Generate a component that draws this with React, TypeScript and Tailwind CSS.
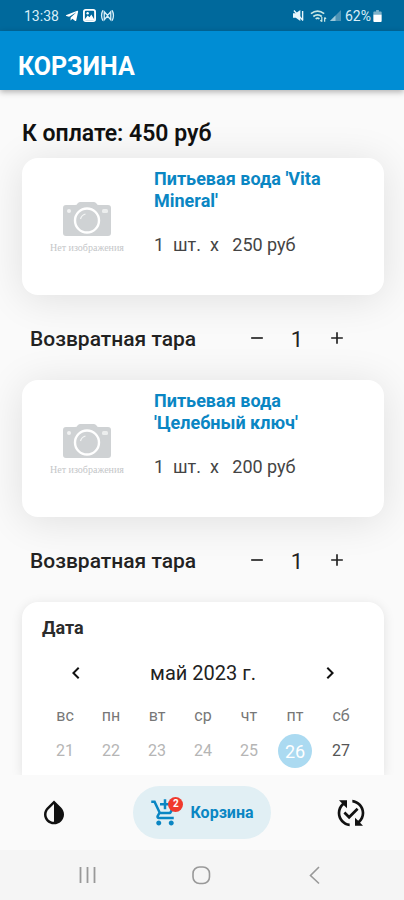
import { FaTelegramPlane } from "react-icons/fa";
import {
  MdAdd,
  MdAddShoppingCart,
  MdChevronLeft,
  MdChevronRight,
  MdPublishedWithChanges,
  MdRemove,
} from "react-icons/md";

const products = [
  { title: "Питьевая вода 'Vita Mineral'", count: 1, price: 250, tare: 1 },
  { title: "Питьевая вода 'Целебный ключ'", count: 1, price: 200, tare: 1 },
];

const weekdays = ["вс", "пн", "вт", "ср", "чт", "пт", "сб"];
const days = [21, 22, 23, 24, 25, 26, 27];
const today = 26;

function StatusBar() {
  return (
    <div className="flex h-[31px] shrink-0 items-center bg-[#00699c] pr-[22px] pl-6 text-[14px] leading-none text-[#d8eef8]">
      <span>13:38</span>
      <FaTelegramPlane className="ml-[6px] h-[14px] w-[14px] text-white" />
      <svg viewBox="0 0 14 14" className="ml-1 h-[13px] w-[13px]">
        <rect x="1" y="1" width="12" height="12" rx="2" fill="none" stroke="#fff" strokeWidth="2" />
        <path d="M2 11l3-4 2 2 2-3 3 5v1H2z" fill="#fff" />
        <circle cx="5" cy="4.5" r="1.3" fill="#fff" />
      </svg>
      <svg viewBox="0 0 16 14" className="ml-1 h-[13px] w-[15px]" fill="none" stroke="currentColor" strokeWidth="1.4">
        <path d="M3 1.5Q.2 7 3 12.5M13 1.5Q15.8 7 13 12.5" />
        <path d="M4.5 11.5V3L8 7l3.5-4v8.5L8 7.5z" />
      </svg>
      <div className="ml-auto flex items-center">
        <svg viewBox="0 0 12 14" className="h-[13px] w-[11px]">
          <path d="M0 4.5h3L8 1v12L3 9.5H0z" fill="#e8f6fc" />
          <path d="M1 1.5l10 11M10.5 2v10" fill="none" stroke="#e8f6fc" strokeWidth="1.5" />
        </svg>
        <svg viewBox="0 0 18 14" className="ml-[6px] h-[14px] w-[17px]" fill="none" stroke="#c8e8e4" strokeWidth="1.8">
          <path d="M1 4.5q7-5.5 14 0M3.5 7.5q4.5-3.6 9 0M6 10q2-1.5 4 0" />
          <path d="M12.5 8v5M11 11.5l1.5 1.5M15.5 13V8.5M17 10l-1.500-1.500" strokeWidth="1.3" />
        </svg>
        <svg viewBox="0 0 12 12" className="ml-[3px] h-[11px] w-[11px]">
          <path d="M0 12L12 0v12z" fill="#4d93b5" />
          <path d="M0 12l6-6v6z" fill="#9cc8da" />
        </svg>
        <span className="ml-1">62%</span>
        <svg viewBox="0 0 9 13" className="ml-[2px] h-3 w-[9px]">
          <path d="M3 0h3v1.5h2A1 1 0 0 1 9 2.5V5H0V2.5a1 1 0 0 1 1-1h2z" fill="#7fb2ca" />
          <path d="M0 5h9v7a1 1 0 0 1-1 1H1a1 1 0 0 1-1-1z" fill="#fff" />
        </svg>
      </div>
    </div>
  );
}

function NoImage() {
  return (
    <div className="flex w-[90px] flex-col items-center pt-11 text-[#cfd2d4]">
      <svg viewBox="0 0 48 35" className="h-[35px] w-12">
        <path
          d="M3 3h9q2 0 2.500-1.500Q15.500 0 17 0h14q1.500 0 2.500 1.500Q34 3 36 3h9q3 0 3 3v25q0 3-3 3H3q-3 0-3-3V6q0-3 3-3z"
          fill="currentColor"
        />
        <circle cx="24" cy="18.5" r="12" fill="none" stroke="#fff" strokeWidth="2.4" />
        <path d="M17.5 17q1-4 5-5" fill="none" stroke="#f4f5f5" strokeWidth="1.2" />
        <circle cx="6" cy="9" r="2" fill="#f1f2f2" />
        <rect x="39" y="7" width="6" height="4" rx="1.5" fill="#eceeee" />
      </svg>
      <span className="mt-[5px] font-['Liberation_Serif',serif] text-[10px] leading-3 whitespace-nowrap text-[#c4c6c8]">
        Нет изображения
      </span>
    </div>
  );
}

function Product({ title, count, price, tare }: (typeof products)[number]) {
  return (
    <>
      <article className="flex min-h-[137px] shrink-0 rounded-2xl bg-white pr-8 pl-5 shadow-[0_4px_40px_rgba(0,0,0,0.11)]">
        <NoImage />
        <div className="ml-[22px] flex-1 pt-[10px]">
          <h2 className="text-[18px] leading-[22px] font-bold text-[#0a86c3]">{title}</h2>
          <p className="mt-[22px] text-[18px] leading-[22px] whitespace-pre text-[#444]">
            {`${count}  шт.  x   ${price} руб`}
          </p>
        </div>
      </article>
      <div className="flex h-[85px] shrink-0 items-center pr-[27px] pl-2 text-[#222]">
        <span className="mr-auto pt-1 text-[21px] font-medium">Возвратная тара</span>
        <button aria-label="Убавить" className="flex h-10 w-10 items-center justify-center">
          <MdRemove className="h-5 w-5" />
        </button>
        <span className="w-10 pt-1 text-center text-[22px]">{tare}</span>
        <button aria-label="Добавить" className="flex h-10 w-10 items-center justify-center">
          <MdAdd className="h-5 w-5" />
        </button>
      </div>
    </>
  );
}

function Calendar() {
  return (
    <section className="flex-1 rounded-t-2xl bg-white px-5 pt-[14px] shadow-[0_2px_12px_rgba(0,0,0,0.1)]">
      <h2 className="text-[18px] leading-6 font-bold text-[#2b2b2b]">Дата</h2>
      <div className="mt-[13px] flex h-10 items-center justify-between px-[14px]">
        <button aria-label="Предыдущий месяц" className="flex h-10 w-10 items-center justify-center">
          <MdChevronLeft className="h-6 w-6" />
        </button>
        <span className="text-[20px] text-[#222]">май 2023 г.</span>
        <button aria-label="Следующий месяц" className="flex h-10 w-10 items-center justify-center">
          <MdChevronRight className="h-6 w-6" />
        </button>
      </div>
      <table className="mt-[10px] w-full table-fixed text-center text-[16px]">
        <thead>
          <tr className="h-[26px] text-[#777]">
            {weekdays.map((d) => (
              <th key={d} className="p-0 font-normal">
                {d}
              </th>
            ))}
          </tr>
        </thead>
        <tbody>
          <tr className="h-11 text-[#b5b5b5]">
            {days.map((d) => (
              <td key={d} className="p-0">
                {d === today ? (
                  <button className="h-[34px] w-[34px] rounded-full bg-[#abdaf1] text-[18px] text-white">
                    {d}
                  </button>
                ) : (
                  <button className={d > today ? "text-[#555]" : ""}>{d}</button>
                )}
              </td>
            ))}
          </tr>
        </tbody>
      </table>
    </section>
  );
}

function BottomNav() {
  return (
    <nav className="relative flex h-[75px] shrink-0 items-center justify-between bg-[#fafafa] pr-[37px] pl-[39px]">
      <a href="#water" aria-label="Вода">
        <svg viewBox="0 0 24 24" className="h-[30px] w-[30px]" fill="#111">
          <path d="M12 4.81V19c-3.31 0-6-2.63-6-5.87 0-1.56.62-3.03 1.75-4.14L12 4.81M6.35 7.56C4.9 8.99 4 10.96 4 13.13 4 17.48 7.58 21 12 21s8-3.52 8-7.87c0-2.17-.9-4.14-2.35-5.57L12 2 6.35 7.56z" />
        </svg>
      </a>
      <a
        href="#cart"
        className="flex h-[53px] items-center rounded-full bg-[#e1eff4] px-[17px] text-[16px] font-bold text-[#0a86c3]"
      >
        <span className="relative">
          <MdAddShoppingCart className="h-[30px] w-[30px]" />
          <span className="absolute -top-px -right-[3px] flex h-[15px] w-[15px] items-center justify-center rounded-full bg-[#f03a2e] text-[10px] leading-none text-white">
            2
          </span>
        </span>
        <span className="ml-[10px]">Корзина</span>
      </a>
      <a href="#orders" aria-label="Заказы">
        <MdPublishedWithChanges className="h-8 w-8 text-[#111]" />
      </a>
    </nav>
  );
}

function SystemNav() {
  return (
    <div className="flex h-[50px] shrink-0 items-center justify-between bg-[#f5f5f5] px-[76px] text-[#999]">
      <button aria-label="Недавние">
        <svg viewBox="0 0 24 24" className="h-6 w-6" fill="none" stroke="currentColor" strokeWidth="1.8">
          <path d="M4.5 4v16M11.5 4v16M18.5 4v16" />
        </svg>
      </button>
      <button aria-label="Домой">
        <svg viewBox="0 0 24 24" className="h-6 w-6" fill="none" stroke="currentColor" strokeWidth="1.6">
          <rect x="3" y="4" width="16.5" height="16.5" rx="6.5" />
        </svg>
      </button>
      <button aria-label="Назад">
        <svg viewBox="0 0 24 24" className="h-6 w-6" fill="none" stroke="currentColor" strokeWidth="1.6">
          <path d="M15 4l-8.5 8.5L15 20.5" />
        </svg>
      </button>
    </div>
  );
}

export default function App() {
  const total = products.reduce((sum, p) => sum + p.count * p.price, 0);

  return (
    <div className="flex h-screen flex-col bg-[#fafafa] font-['Roboto',sans-serif] text-[#111]">
      <StatusBar />
      <header className="z-10 flex h-[59px] shrink-0 items-center bg-[#008dd4] px-[18px] pt-3 shadow-[0_2px_6px_rgba(0,0,0,0.3)]">
        <h1 className="text-[25px] leading-8 font-bold text-white">КОРЗИНА</h1>
      </header>
      <main className="flex min-h-0 flex-1 flex-col overflow-hidden pt-7 pr-5 pl-[22px]">
        <p className="h-10 shrink-0 text-[23px] leading-8 font-semibold">К оплате: {total} руб</p>
        {products.map((p) => (
          <Product key={p.title} {...p} />
        ))}
        <Calendar />
      </main>
      <BottomNav />
      <SystemNav />
    </div>
  );
}
